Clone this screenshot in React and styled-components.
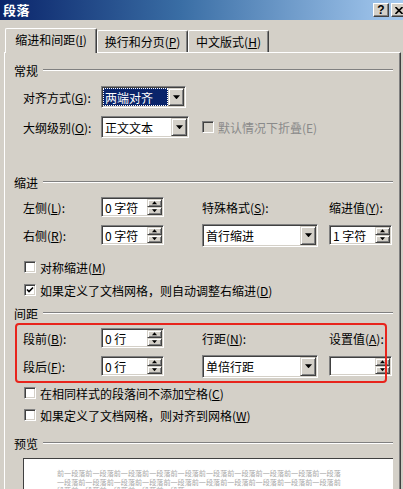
import React from 'react';
import styled, { createGlobalStyle } from 'styled-components';

const Global = createGlobalStyle`
  html, body { margin: 0; padding: 0; overflow: hidden; background: #d4d0c8; }
  body {
    font-family: "Noto Sans CJK SC", "Liberation Sans", sans-serif;
    font-size: 12px;
    color: #000;
  }
  u { text-decoration-thickness: 1px; text-underline-offset: 1px; }
`;

const Dialog = styled.div`
  width: 403px;
  height: 489px;
  overflow: hidden;
  background: #d4d0c8;
  display: flex;
  flex-direction: column;
`;

const TitleBar = styled.div`
  height: 20px;
  flex: none;
  display: flex;
  align-items: center;
  justify-content: space-between;
  background: linear-gradient(to right, #0a246a 0%, #3a6ea5 45%, #a6caf0 100%);
  padding-left: 3px;
`;

const Title = styled.span`
  color: #fff;
  font-weight: bold;
  font-size: 13px;
  line-height: 20px;
  letter-spacing: 0.5px;
`;

const TitleButtons = styled.div`
  display: flex;
  gap: 2px;
  margin-right: -4px;
`;

const TitleButton = styled.div`
  width: 16px;
  height: 14px;
  box-sizing: border-box;
  background: #d4d0c8;
  border: 1px solid;
  border-color: #fff #404040 #404040 #fff;
  box-shadow: inset -1px -1px #808080;
  font: bold 12px "Liberation Sans", sans-serif;
  display: flex;
  align-items: center;
  justify-content: center;
  line-height: 1;
`;

const TabRow = styled.div`
  height: 32px;
  flex: none;
  display: flex;
  align-items: flex-end;
  padding-left: 5px;
`;

const Tab = styled.div`
  position: relative;
  z-index: 1;
  width: ${p => p.$w}px;
  height: ${p => (p.$active ? 25 : 22)}px;
  margin-bottom: ${p => (p.$active ? -1 : 0)}px;
  box-sizing: border-box;
  background: #d4d0c8;
  border-top: 1px solid #fff;
  border-left: 1px solid #fff;
  border-right: 1px solid #404040;
  border-radius: 2px 2px 0 0;
  box-shadow: inset -1px 0 #808080;
  display: flex;
  align-items: center;
  justify-content: center;
  padding-bottom: ${p => (p.$active ? 3 : 0)}px;
  font-size: 12px;
`;

const Panel = styled.div`
  margin-left: 4px;
  width: 397px;
  flex: 1;
  box-sizing: border-box;
  border: 1px solid;
  border-color: #fff #404040 #404040 #fff;
  box-shadow: inset -1px 0 #808080;
  padding: 9px 0 0 9px;
  display: flex;
  flex-direction: column;
`;

const SectionHeader = styled.div`
  display: flex;
  align-items: center;
  height: 16px;
  gap: 5px;
  margin-right: 7px;
  margin-top: ${p => p.$mt || 0}px;
  flex: none;
`;

const Rule = styled.div`
  flex: 1;
  border-top: 1px solid #808080;
  border-bottom: 1px solid #fff;
`;

const FieldRow = styled.div`
  display: flex;
  align-items: center;
  height: 22px;
  padding-left: 9px;
  margin-top: ${p => p.$mt || 0}px;
  flex: none;
`;

const FieldLabel = styled.span`
  width: 78px;
  flex: none;
  white-space: nowrap;
`;

const Grid = styled.div`
  display: grid;
  grid-template-columns: 78px 101px 127px 63px;
  grid-auto-rows: 20px;
  row-gap: 8px;
  align-items: center;
  padding-left: ${p => p.$pl ?? 9}px;
  margin-top: ${p => p.$mt || 0}px;
  flex: none;
`;

const Highlight = styled.div`
  position: relative;
  margin-left: 1px;
  width: 372px;
  box-sizing: border-box;
  padding: 5px 0 7px 0;
  margin-top: ${p => p.$mt || 0}px;
  flex: none;
  &::after {
    content: "";
    position: absolute;
    inset: 0;
    border: 2px solid #e8241c;
    border-radius: 4px;
    pointer-events: none;
    z-index: 2;
  }
`;

const Sunken = styled.div`
  height: ${p => p.$h || 20}px;
  width: ${p => p.$w}px;
  box-sizing: border-box;
  background: #fff;
  border: 1px solid;
  border-color: #808080 #fff #fff #808080;
  box-shadow: inset 1px 1px #404040, inset -1px -1px #d4d0c8;
  display: flex;
  align-items: stretch;
  padding: 1px;
  white-space: nowrap;
`;

const FieldText = styled.div`
  flex: 1;
  display: flex;
  align-items: center;
  padding-left: 2px;
  background: ${p => (p.$selected ? '#0a246a' : 'transparent')};
  color: ${p => (p.$selected ? '#fff' : '#000')};
  outline: ${p => (p.$selected ? '1px dotted #fff' : 'none')};
  outline-offset: -1px;
  overflow: hidden;
`;

const Raised = styled.div`
  box-sizing: border-box;
  background: #d4d0c8;
  border: 1px solid;
  border-color: #d4d0c8 #404040 #404040 #d4d0c8;
  box-shadow: inset 1px 1px #fff, inset -1px -1px #808080;
  display: flex;
  align-items: center;
  justify-content: center;
`;

const DropButton = styled(Raised)`
  width: 16px;
  flex: none;
`;

const SpinColumn = styled.div`
  width: 15px;
  flex: none;
  display: flex;
  flex-direction: column;
`;

const SpinButton = styled(Raised)`
  flex: 1;
`;

const CheckRow = styled.div`
  display: flex;
  align-items: center;
  gap: 4px;
  height: 16px;
  padding-left: ${p => p.$pl ?? 10}px;
  margin-top: ${p => p.$mt || 0}px;
  margin-left: ${p => p.$ml || 0}px;
  color: ${p => (p.$disabled ? '#8a8a8a' : '#000')};
  flex: none;
  white-space: nowrap;
`;

const CheckBox = styled.div`
  width: 12px;
  height: 12px;
  box-sizing: border-box;
  background: ${p => (p.$disabled ? '#d4d0c8' : '#fff')};
  border: 1px solid;
  border-color: #808080 #fff #fff #808080;
  box-shadow: inset 1px 1px #404040, inset -1px -1px #d4d0c8;
  display: flex;
  align-items: center;
  justify-content: center;
  flex: none;
`;

const Preview = styled.div`
  margin: 7px 0 0 9px;
  width: 370px;
  flex: 1;
  background: #fff;
  border-top: 1px solid #404040;
  border-left: 1px solid #404040;
  padding: 10px 0 0 33px;
  box-sizing: border-box;
`;

const PreviewLine = styled.div`
  font-size: 7.1px;
  line-height: 8.5px;
  color: #a8a8a8;
  white-space: nowrap;
`;

const Arrow = ({ dir = 'down', size = 7 }) => (
  <svg width={size} height={Math.ceil(size / 2) + 0.5} viewBox="0 0 7 4">
    {dir === 'down' ? (
      <polygon points="0,0 7,0 3.5,4" fill="#000" />
    ) : (
      <polygon points="0,4 7,4 3.5,0" fill="#000" />
    )}
  </svg>
);

const Select = ({ w, h = 22, value, selected }) => (
  <Sunken $w={w} $h={h}>
    <FieldText $selected={selected}>{value}</FieldText>
    <DropButton>
      <Arrow dir="down" size={7} />
    </DropButton>
  </Sunken>
);

const SpinBox = ({ value }) => (
  <Sunken $w={63} $h={20}>
    <FieldText>{value}</FieldText>
    <SpinColumn>
      <SpinButton>
        <Arrow dir="up" size={5} />
      </SpinButton>
      <SpinButton>
        <Arrow dir="down" size={5} />
      </SpinButton>
    </SpinColumn>
  </Sunken>
);

const Check = ({ checked }) => (
  <CheckBox>
    {checked && (
      <svg width="8" height="8" viewBox="0 0 8 8">
        <path d="M1 3.5 L3 5.5 L7 1.5" stroke="#000" strokeWidth="1.6" fill="none" />
      </svg>
    )}
  </CheckBox>
);

const DisabledCheck = styled(CheckBox)`
  background: #d4d0c8;
`;

export default function App() {
  return (
    <Dialog>
      <Global />
      <TitleBar>
        <Title>段落</Title>
        <TitleButtons>
          <TitleButton>?</TitleButton>
          <TitleButton>
            <svg width="8" height="7" viewBox="0 0 8 7">
              <path d="M0.5 0 L7.5 7 M7.5 0 L0.5 7" stroke="#000" strokeWidth="1.6" />
            </svg>
          </TitleButton>
        </TitleButtons>
      </TitleBar>

      <TabRow>
        <Tab $w={92} $active>缩进和间距(<u>I</u>)</Tab>
        <Tab $w={91}>换行和分页(<u>P</u>)</Tab>
        <Tab $w={81}>中文版式(<u>H</u>)</Tab>
      </TabRow>

      <Panel>
        <SectionHeader>
          <span>常规</span>
          <Rule />
        </SectionHeader>
        <FieldRow $mt={8}>
          <FieldLabel>对齐方式(<u>G</u>):</FieldLabel>
          <Select w={85} value="两端对齐" selected />
        </FieldRow>
        <FieldRow $mt={8}>
          <FieldLabel>大纲级别(<u>O</u>):</FieldLabel>
          <Select w={88} value="正文文本" />
          <CheckRow $disabled $pl={0} $ml={13}>
            <DisabledCheck />
            <span>默认情况下折叠(E)</span>
          </CheckRow>
        </FieldRow>

        <SectionHeader $mt={36}>
          <span>缩进</span>
          <Rule />
        </SectionHeader>
        <Grid $mt={7}>
          <span>左侧(<u>L</u>):</span>
          <SpinBox value="0 字符" />
          <span>特殊格式(<u>S</u>):</span>
          <span>缩进值(<u>Y</u>):</span>
          <span>右侧(<u>R</u>):</span>
          <SpinBox value="0 字符" />
          <Select w={116} h={23} value="首行缩进" />
          <SpinBox value="1 字符" />
        </Grid>
        <CheckRow $mt={14}>
          <Check />
          <span>对称缩进(<u>M</u>)</span>
        </CheckRow>
        <CheckRow $mt={7}>
          <Check checked />
          <span>如果定义了文档网格，则自动调整右缩进(<u>D</u>)</span>
        </CheckRow>

        <SectionHeader $mt={7}>
          <span>间距</span>
          <Rule />
        </SectionHeader>
        <Highlight $mt={2}>
          <Grid $pl={8}>
            <span>段前(<u>B</u>):</span>
            <SpinBox value="0 行" />
            <span>行距(<u>N</u>):</span>
            <span>设置值(<u>A</u>):</span>
            <span>段后(<u>F</u>):</span>
            <SpinBox value="0 行" />
            <Select w={116} h={23} value="单倍行距" />
            <SpinBox value="" />
          </Grid>
        </Highlight>
        <CheckRow $mt={2}>
          <Check />
          <span>在相同样式的段落间不添加空格(<u>C</u>)</span>
        </CheckRow>
        <CheckRow $mt={6}>
          <Check />
          <span>如果定义了文档网格，则对齐到网格(<u>W</u>)</span>
        </CheckRow>

        <SectionHeader $mt={12}>
          <span>预览</span>
          <Rule />
        </SectionHeader>
        <Preview>
          <PreviewLine>{'前一段落'.repeat(10)}</PreviewLine>
          <PreviewLine>{'一段落前'.repeat(10)}</PreviewLine>
          <PreviewLine>{'段落前一'.repeat(4) + '段落'}</PreviewLine>
        </Preview>
      </Panel>
    </Dialog>
  );
}
